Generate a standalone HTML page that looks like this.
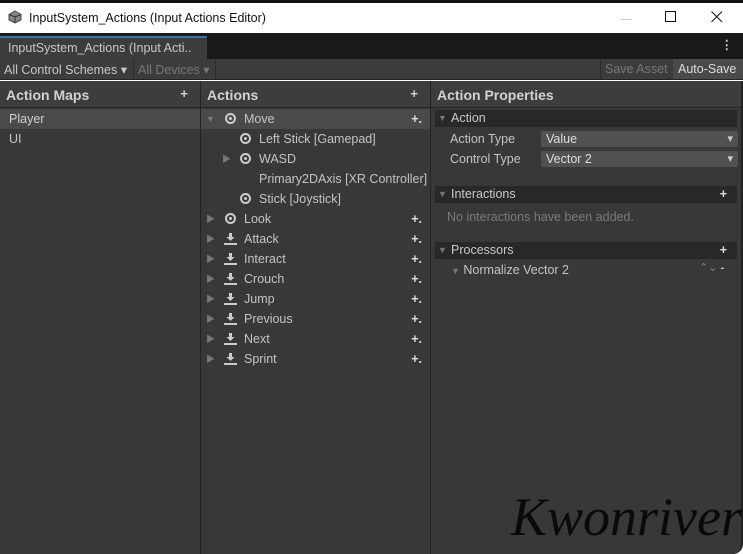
<!DOCTYPE html>
<html><head><meta charset="utf-8"><style>
*{box-sizing:border-box;margin:0;padding:0}
body{width:743px;height:554px;overflow:hidden;background:#fff;font-family:"Liberation Sans","Noto Sans CJK KR",sans-serif;font-size:12.5px;color:#c4c4c4;position:relative}
.abs{position:absolute}
.title{left:0;top:0;width:743px;height:33px;background:#fff;border-top:3px solid #111}
.title span{position:absolute;left:29px;top:8px;color:#111;font-size:12.5px}
.tabbar{left:0;top:33px;width:743px;height:26px;background:#191919}
.tab{left:0;top:36px;width:207px;height:23px;background:#3c3c3c;border-top:2px solid #3a72b0;padding:3px 0 0 8px;color:#c8c8c8}
.tool{left:0;top:59px;width:743px;height:21px;background:#3c3c3c;border-bottom:1px solid #232323}
.panel{top:81px;bottom:0;background:#383838}
.hdr{height:27px;background:#3d3d3d;border-bottom:1px solid #262626;font-weight:bold;font-size:14px;color:#d2d2d2;padding:6px 0 0 6px;position:relative}
.hdr .p{position:absolute;right:12px;top:5px;font-size:13px}
.row{height:20px;line-height:20px;position:relative;white-space:nowrap}
.sec{height:17px;line-height:17px;background:#282828;padding-left:16px;color:#c8c8c8;position:absolute;left:4px;width:302px}
.tri{position:absolute;color:#777;font-size:9px}
.plus{position:absolute;right:8px;top:0;font-weight:bold;color:#ddd}
.dd{position:absolute;width:198px;height:16px;background:#515151;border-radius:2px;padding-left:5px;line-height:16px;color:#ddd}
.dd:after{content:"▾";position:absolute;right:5px;top:0;font-size:11px;color:#ccc}
.ic{position:absolute;width:11px;height:11px;border-radius:50%;border:2.5px solid #ccc;top:4px}
.ic:after{content:"";position:absolute;left:1.5px;top:1.5px;width:3px;height:3px;border-radius:50%;background:#ccc}
.bt{position:absolute;top:4px;width:13px;height:12px}
</style></head><body>
<div class="abs title"><svg style="position:absolute;left:8px;top:7px" width="14" height="14" viewBox="0 0 14 14"><path d="M7 1L13 4.5V10L7 13L1 10V4.5Z" fill="#888" stroke="#444"/><path d="M7 7L13 4.5M7 7L1 4.5M7 7V13" stroke="#333"/></svg><span>InputSystem_Actions (Input Actions Editor)</span>
<svg style="position:absolute;left:620px;top:16px" width="12" height="2"><rect width="12" height="1" fill="#ccc"/></svg>
<svg style="position:absolute;left:665px;top:8px" width="12" height="12"><rect x="0.5" y="0.5" width="10" height="10" fill="none" stroke="#111"/></svg>
<svg style="position:absolute;left:711px;top:8px" width="12" height="12"><path d="M0.5 0.5L11 11M11 0.5L0.5 11" stroke="#111"/></svg></div>
<div class="abs tabbar"><span style="position:absolute;right:10px;top:4px;color:#ccc;font-weight:bold">⋮</span></div>
<div class="abs tab">InputSystem_Actions (Input Acti..</div>
<div class="abs tool">
<span class="abs" style="left:4px;top:3px;color:#c8c8c8">All Control Schemes ▾</span>
<span class="abs" style="left:133px;top:0;height:20px;border-left:1px solid #2c2c2c"></span>
<span class="abs" style="left:138px;top:3px;color:#777">All Devices ▾</span>
<span class="abs" style="left:215px;top:0;height:20px;border-left:1px solid #2c2c2c"></span>
<span class="abs" style="left:600px;top:0;width:72px;height:20px;border-left:1px solid #2c2c2c;padding:3px 0 0 4px;color:#777">Save Asset</span>
<span class="abs" style="left:673px;top:0;width:70px;height:20px;background:#4a4a4a;padding:3px 0 0 5px;color:#ddd">Auto-Save</span>
</div>
<div class="abs panel" style="left:0;width:200px">
<div class="hdr">Action Maps<span class="p">+</span></div>
<div class="row" style="margin-top:1px;background:#4a4a4a;padding-left:9px;color:#d0d0d0">Player</div>
<div class="row" style="padding-left:9px">UI</div>
</div>
<div class="abs" style="left:200px;top:81px;bottom:0;width:1px;background:#232323"></div>
<div class="abs panel" style="left:201px;width:229px">
<div class="hdr">Actions<span class="p">+</span></div>
<div style="margin-top:1px">
<div class="row" style="background:#4a4a4a"><span class="tri" style="left:5px">▼</span><span class="ic" style="left:24px"></span><span style="position:absolute;left:43px">Move</span><span class="plus">+.</span></div>
<div class="row"><span class="ic" style="left:39px"></span><span style="position:absolute;left:58px">Left Stick [Gamepad]</span></div>
<div class="row"><span class="tri" style="left:21px">▶</span><span class="ic" style="left:39px"></span><span style="position:absolute;left:58px">WASD</span></div>
<div class="row"><span style="position:absolute;left:58px">Primary2DAxis [XR Controller]</span></div>
<div class="row"><span class="ic" style="left:39px"></span><span style="position:absolute;left:58px">Stick [Joystick]</span></div>
<div class="row"><span class="tri" style="left:5px">▶</span><span class="ic" style="left:24px"></span><span style="position:absolute;left:43px">Look</span><span class="plus">+.</span></div>
<div class="row"><span class="tri" style="left:5px">▶</span><svg class="bt" style="left:23px" viewBox="0 0 13 12"><path d="M5 0h3v4h2.5L6.5 8 2.5 4H5z M0 10h13v2H0z" fill="#ccc"/></svg><span style="position:absolute;left:43px">Attack</span><span class="plus">+.</span></div>
<div class="row"><span class="tri" style="left:5px">▶</span><svg class="bt" style="left:23px" viewBox="0 0 13 12"><path d="M5 0h3v4h2.5L6.5 8 2.5 4H5z M0 10h13v2H0z" fill="#ccc"/></svg><span style="position:absolute;left:43px">Interact</span><span class="plus">+.</span></div>
<div class="row"><span class="tri" style="left:5px">▶</span><svg class="bt" style="left:23px" viewBox="0 0 13 12"><path d="M5 0h3v4h2.5L6.5 8 2.5 4H5z M0 10h13v2H0z" fill="#ccc"/></svg><span style="position:absolute;left:43px">Crouch</span><span class="plus">+.</span></div>
<div class="row"><span class="tri" style="left:5px">▶</span><svg class="bt" style="left:23px" viewBox="0 0 13 12"><path d="M5 0h3v4h2.5L6.5 8 2.5 4H5z M0 10h13v2H0z" fill="#ccc"/></svg><span style="position:absolute;left:43px">Jump</span><span class="plus">+.</span></div>
<div class="row"><span class="tri" style="left:5px">▶</span><svg class="bt" style="left:23px" viewBox="0 0 13 12"><path d="M5 0h3v4h2.5L6.5 8 2.5 4H5z M0 10h13v2H0z" fill="#ccc"/></svg><span style="position:absolute;left:43px">Previous</span><span class="plus">+.</span></div>
<div class="row"><span class="tri" style="left:5px">▶</span><svg class="bt" style="left:23px" viewBox="0 0 13 12"><path d="M5 0h3v4h2.5L6.5 8 2.5 4H5z M0 10h13v2H0z" fill="#ccc"/></svg><span style="position:absolute;left:43px">Next</span><span class="plus">+.</span></div>
<div class="row"><span class="tri" style="left:5px">▶</span><svg class="bt" style="left:23px" viewBox="0 0 13 12"><path d="M5 0h3v4h2.5L6.5 8 2.5 4H5z M0 10h13v2H0z" fill="#ccc"/></svg><span style="position:absolute;left:43px">Sprint</span><span class="plus">+.</span></div>
</div></div>
<div class="abs" style="left:430px;top:81px;bottom:0;width:1px;background:#232323"></div>
<div class="abs panel" style="left:431px;width:312px;border-right:2px solid #222;border-bottom-right-radius:10px">
<div class="hdr">Action Properties</div>
<div class="sec" style="top:29px"><span class="tri" style="left:3px">▼</span>Action</div>
<div class="abs" style="left:19px;top:51px">Action Type</div>
<div class="abs" style="left:19px;top:71px">Control Type</div>
<div class="dd" style="left:110px;top:50px;width:197px">Value</div>
<div class="dd" style="left:110px;top:70px;width:197px">Vector 2</div>
<div class="sec" style="top:105px"><span class="tri" style="left:3px">▼</span>Interactions<span class="plus" style="right:10px">+</span></div>
<div class="abs" style="left:16px;top:129px;color:#7a7a7a">No interactions have been added.</div>
<div class="sec" style="top:161px"><span class="tri" style="left:3px">▼</span>Processors<span class="plus" style="right:10px">+</span></div>
<div class="abs" style="left:20px;top:182px"><span style="color:#777;font-size:9px">▼</span> Normalize Vector 2</div>
<div class="abs" style="left:268px;top:180px;color:#888;font-size:11px">⌃⌄ <b style="color:#ccc">-</b></div>
<div class="abs" style="left:80px;top:405px;font-family:'Liberation Serif',serif;font-style:italic;font-size:54px;color:#0a0a0a;white-space:nowrap">Kwonriver</div>
</div>
</body></html>
